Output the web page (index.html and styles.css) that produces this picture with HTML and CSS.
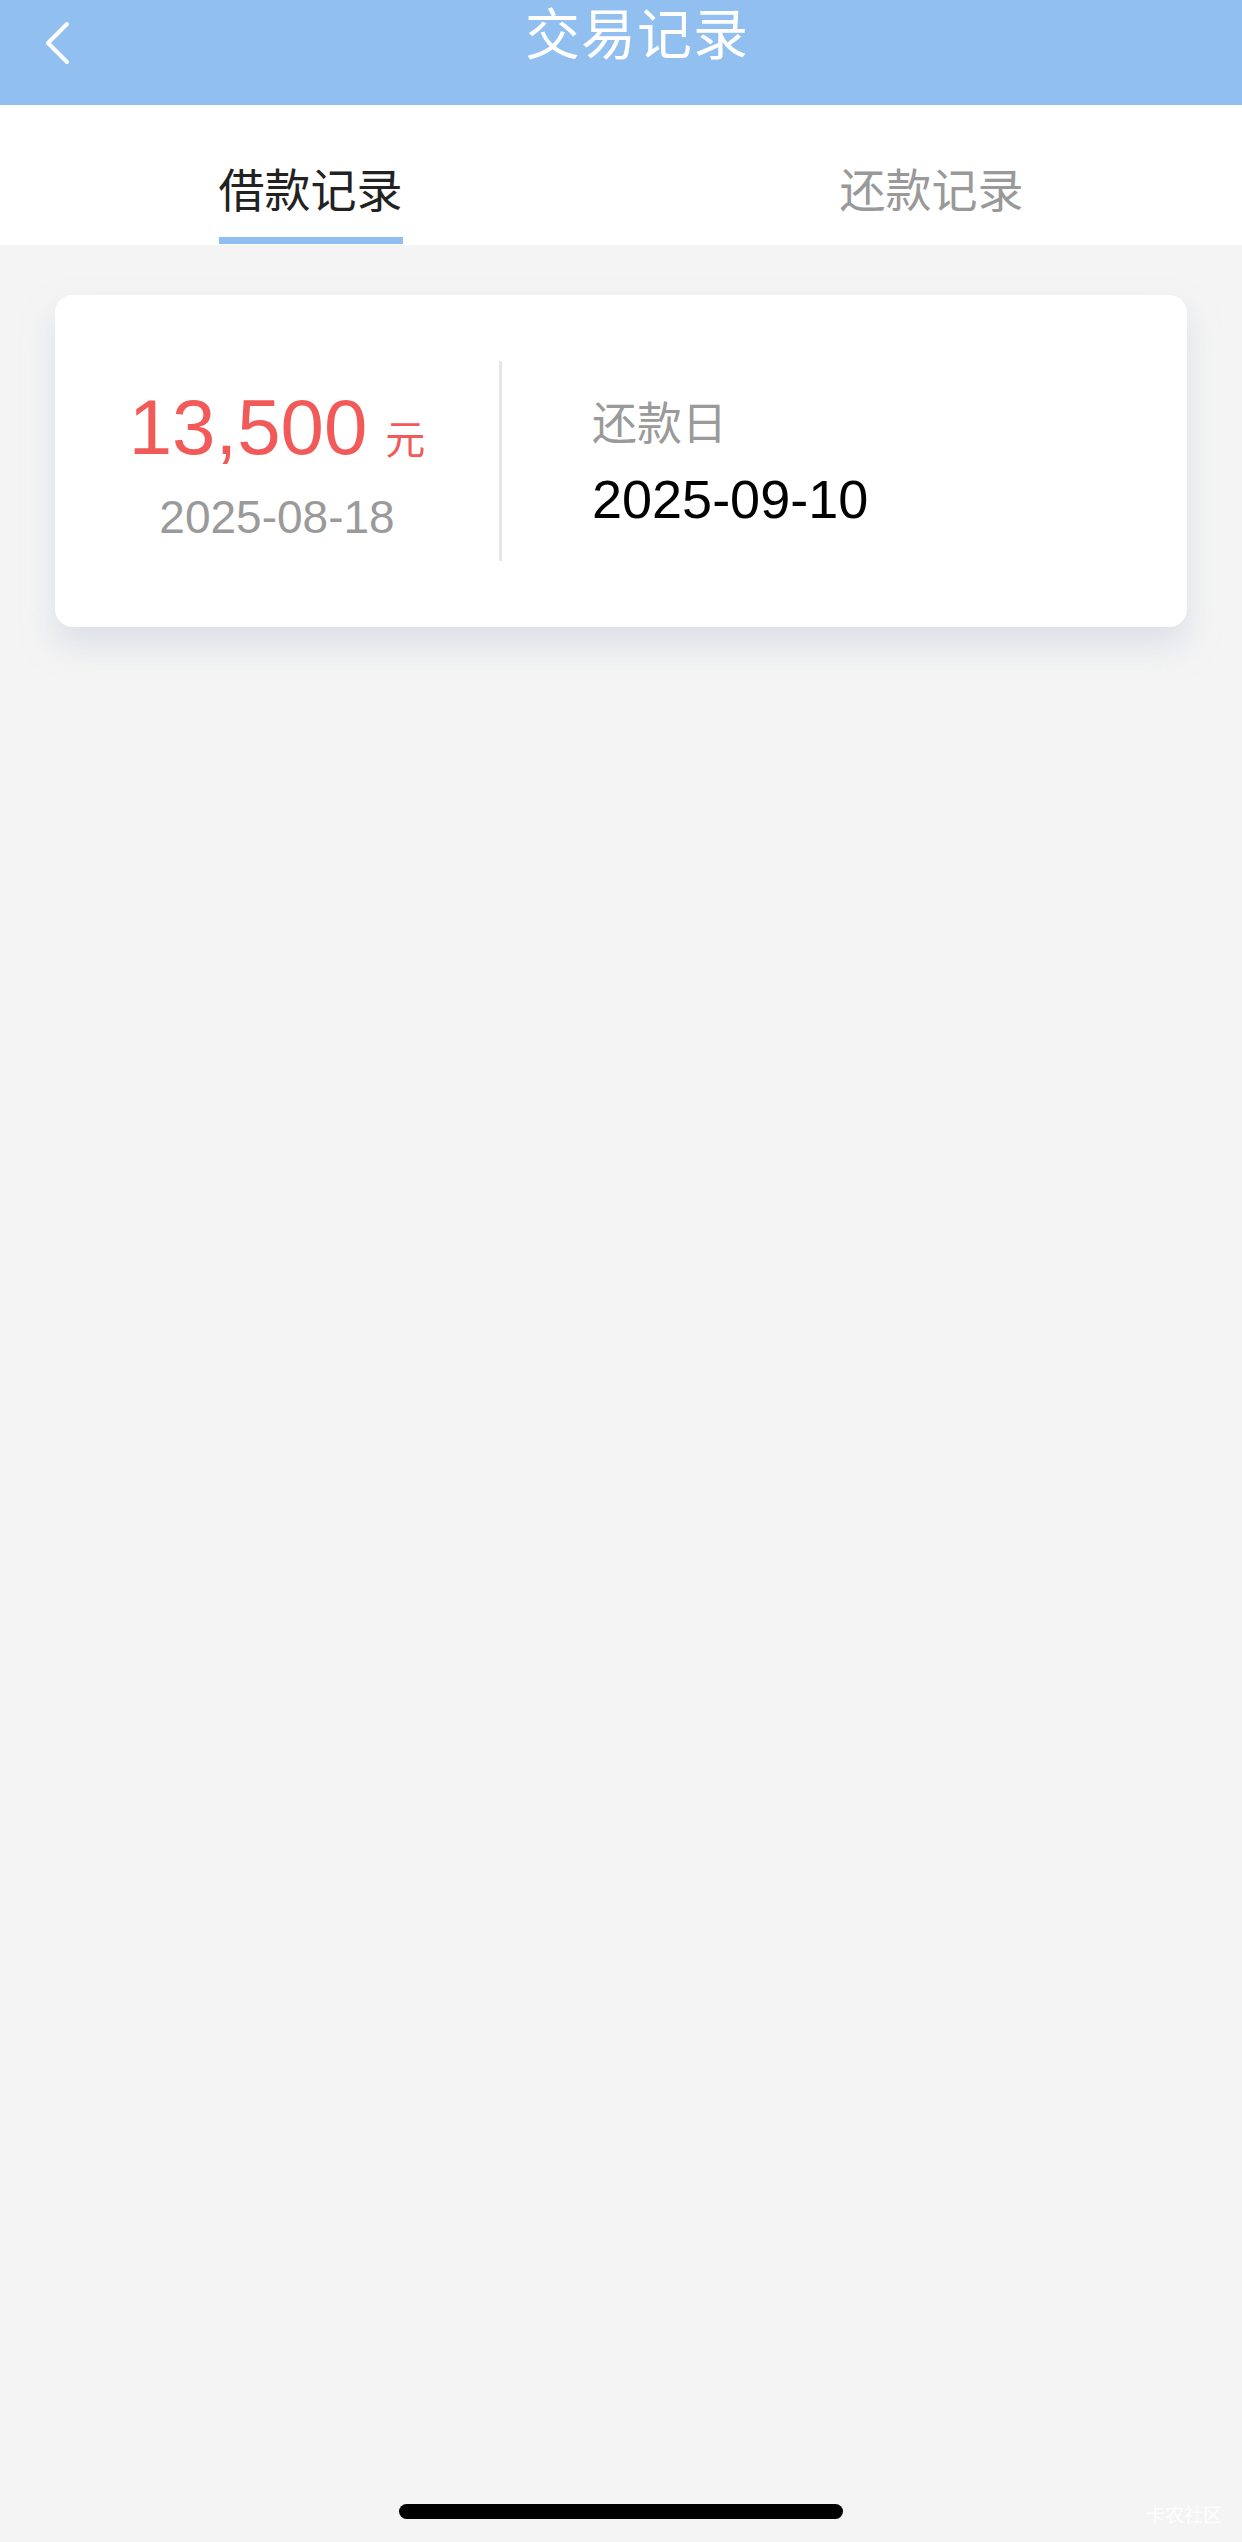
FILE: index.html
```html
<!DOCTYPE html>
<html lang="zh-CN">
<head>
  <meta charset="UTF-8">
  <meta name="viewport" content="width=device-width, initial-scale=1.0">
  <title>交易记录</title>
  <link rel="stylesheet" href="styles.css">
</head>
<body>
  <div class="page">
    <header class="nav-bar">
      <span class="back-btn">
        <svg width="30" height="44" viewBox="0 0 30 44">
          <path d="M25 3 L6 22 L25 41" fill="none" stroke="#fff" stroke-width="4" stroke-linecap="round" stroke-linejoin="round"/>
        </svg>
      </span>
      <h1 class="nav-title">交易记录</h1>
    </header>

    <div class="tabs">
      <div class="tab active"><span>借款记录</span></div>
      <div class="tab"><span>还款记录</span></div>
    </div>

    <div class="record-list">
      <div class="record-card">
        <div class="record-left">
          <div class="amount">13,500<span class="unit">元</span></div>
          <div class="loan-date">2025-08-18</div>
        </div>
        <div class="divider"></div>
        <div class="record-right">
          <div class="label">还款日</div>
          <div class="due-date">2025-09-10</div>
        </div>
      </div>
    </div>

    <div class="home-bar"></div>
    <div class="watermark">卡农社区</div>
  </div>
</body>
</html>
```

FILE: styles.css
```css
html, body {
  margin: 0;
  padding: 0;
}
body {
  font-family: "Liberation Sans", "Noto Sans CJK SC", sans-serif;
  background-color: #f4f4f4;
}
.page {
  position: relative;
  width: 1242px;
  height: 2542px;
  overflow: hidden;
}
.nav-bar {
  position: relative;
  height: 105px;
  background-color: #91c0f0;
  display: flex;
  justify-content: center;
}
.back-btn {
  position: absolute;
  left: 42px;
  top: 21px;
  display: flex;
}
.nav-title {
  margin: 0;
  padding-left: 32px;
  color: #fff;
  font-size: 55px;
  font-weight: normal;
  line-height: 70px;
  letter-spacing: 1px;
}
.tabs {
  display: flex;
  height: 140px;
  background-color: #fff;
}
.tab {
  flex: 1;
  display: flex;
  justify-content: center;
}
.tab span {
  padding-top: 54px;
  font-size: 46px;
  line-height: 64px;
  color: #999;
  border-bottom: 7px solid transparent;
  height: 78px;
  box-sizing: content-box;
}
.tab.active span {
  color: #222;
  border-bottom-color: #8fbfee;
}
.record-list {
  padding: 50px 55px;
}
.record-card {
  display: flex;
  align-items: center;
  height: 332px;
  background-color: #fff;
  border-radius: 18px;
  box-shadow: 0 18px 30px rgba(200, 208, 222, 0.55);
}
.record-left {
  width: 444px;
  display: flex;
  flex-direction: column;
  align-items: center;
  padding-top: 4px;
}
.amount {
  color: #f25a5a;
  font-size: 78px;
  line-height: 90px;
}
.unit {
  font-size: 40px;
  margin-left: 18px;
}
.loan-date {
  color: #9a9a9a;
  font-size: 46px;
  line-height: 56px;
  margin-top: 4px;
}
.divider {
  width: 3px;
  height: 200px;
  background-color: #e6e6e6;
}
.record-right {
  padding-left: 90px;
  padding-top: 4px;
}
.label {
  color: #9a9a9a;
  font-size: 45px;
  line-height: 60px;
}
.due-date {
  color: #000;
  font-size: 54px;
  line-height: 64px;
  margin-top: 12px;
}
.home-bar {
  position: absolute;
  left: 399px;
  top: 2504px;
  width: 444px;
  height: 15px;
  border-radius: 8px;
  background-color: #000;
}
.watermark {
  position: absolute;
  right: 20px;
  top: 2500px;
  font-size: 19px;
  color: rgba(255, 255, 255, 0.9);
}
```
